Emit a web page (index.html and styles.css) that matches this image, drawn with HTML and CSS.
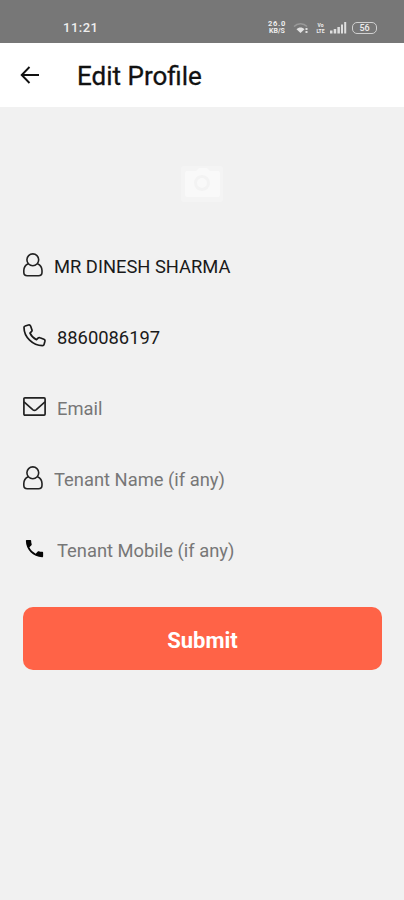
FILE: index.html
```html
<!DOCTYPE html>
<html lang="en">
<head>
    <meta charset="UTF-8">
    <meta name="viewport" content="width=device-width, initial-scale=1.0">
    <title>Edit Profile</title>
    <link rel="stylesheet" href="styles.css">
</head>
<body>

<div class="status-bar">
    <span class="time">11:21</span>
    <div class="status-icons">
        <div class="speed"><span>26.0</span><span>KB/S</span></div>
        <svg class="wifi" width="17" height="12" viewBox="0 0 17 12" fill="none">
            <path d="M1 4.500C4.500.8 10.500.8 14 4.500" stroke="#999" stroke-width="1.500"/>
            <path d="M3.500 7.200C5.800 4.800 9.200 4.800 11.500 7.200L7.500 11z" fill="#e2e2e2"/>
            <path d="M13.500 6v5" stroke="#ddd" stroke-width="2" stroke-dasharray="2 1"/>
        </svg>
        <div class="volte"><span>Vo</span><span>LTE</span></div>
        <svg class="signal" width="17" height="12" viewBox="0 0 17 12" fill="#dedede">
            <rect x="0" y="8.500" width="2.500" height="3"/>
            <rect x="3.700" y="7" width="2.500" height="4.500"/>
            <rect x="7.400" y="5" width="2.500" height="6.500"/>
            <rect x="11" y="2.500" width="2" height="9"/>
            <rect x="14.200" y="0" width="2" height="11.500"/>
        </svg>
        <div class="battery">56</div>
    </div>
</div>

<header class="header">
    <svg class="back" width="20" height="18" viewBox="0 0 20 18" fill="none" stroke="#111" stroke-width="1.900">
        <path d="M9.500 1L1.700 9l7.800 8M2 9h17"/>
    </svg>
    <h1>Edit Profile</h1>
</header>

<main class="content">
    <div class="photo">
        <svg width="44" height="38" viewBox="0 0 44 38">
            <rect x="1" y="1" width="42" height="36" rx="3" fill="#f4f4f4"/>
            <path d="M7 6h9l3-3h8l3 3h8q2 0 2 2v22q0 2-2 2H7q-2 0-2-2V8q0-2 2-2z" fill="#f9f9f9"/>
            <circle cx="22" cy="18" r="6.500" fill="#f9f9f9" stroke="#f3f3f3" stroke-width="3"/>
        </svg>
    </div>

    <form class="form">
        <label class="field">
            <svg class="icon user" width="20" height="24" viewBox="0 0 20 24" fill="none" stroke="#222" stroke-width="1.600">
                <circle cx="9.800" cy="6.800" r="5.900"/>
                <path d="M5.200 10.700C2.500 12 .8 14.500.8 17.600v1.600c0 2.300 1.300 3.500 3.500 3.500h11.200c2.200 0 3.500-1.200 3.500-3.500v-1.600c0-3.100-1.700-5.600-4.500-6.900"/>
            </svg>
            <input type="text" value="MR DINESH SHARMA">
        </label>
        <label class="field">
            <svg class="icon phone" width="23" height="23" viewBox="0 0 23 23" fill="none" stroke="#1a1a1a" stroke-width="1.700" stroke-linejoin="round">
                <path d="M2.200 2L5.400 1c1-.3 1.800.1 2.200 1l1.300 3.700c.3.800.1 1.500-.5 2L7 9.200c1.300 2.900 3.500 5.100 6.500 6.500l1.500-1.500c.6-.6 1.300-.7 2-.4l3.900 1.500c.8.300 1.200 1 1 1.900l-.8 3.200c-.2.900-.8 1.300-1.700 1.300C9.800 21.600 1 13.200 1 3.600c0-.8.400-1.400 1.200-1.600z"/>
            </svg>
            <input type="tel" value="8860086197">
        </label>
        <label class="field">
            <svg class="icon mail" width="23" height="19" viewBox="0 0 23 19" fill="none" stroke="#222" stroke-width="1.700">
                <rect x=".9" y=".9" width="21.200" height="17.200" rx="1"/>
                <path d="M1 4.900l8.700 7.700q1.800 1.400 3.600 0L22 4.900"/>
            </svg>
            <input type="email" placeholder="Email">
        </label>
        <label class="field">
            <svg class="icon user" width="20" height="24" viewBox="0 0 20 24" fill="none" stroke="#222" stroke-width="1.600">
                <circle cx="9.800" cy="6.800" r="5.900"/>
                <path d="M5.200 10.700C2.500 12 .8 14.500.8 17.600v1.600c0 2.300 1.300 3.500 3.500 3.500h11.200c2.200 0 3.500-1.200 3.500-3.500v-1.600c0-3.100-1.700-5.600-4.500-6.900"/>
            </svg>
            <input type="text" placeholder="Tenant Name (if any)">
        </label>
        <label class="field">
            <svg class="icon call" width="23" height="23" viewBox="0 0 24 24" fill="#050505">
                <path d="M6.620 10.790c1.440 2.830 3.760 5.140 6.590 6.590l2.200-2.200c.27-.27.67-.36 1.020-.24 1.120.37 2.330.57 3.570.57.550 0 1 .45 1 1V20c0 .55-.45 1-1 1-9.390 0-17-7.610-17-17 0-.55.450-1 1-1h3.500c.55 0 1 .45 1 1 0 1.250.2 2.450.57 3.570.11.350.03.740-.25 1.020l-2.200 2.200z"/>
            </svg>
            <input type="tel" placeholder="Tenant Mobile (if any)">
        </label>
        <button type="button" class="submit">Submit</button>
    </form>
</main>

</body>
</html>
```

FILE: styles.css
```css
* {
    box-sizing: border-box;
}
body {
    margin: 0;
    min-height: 100vh;
    background-color: #f1f1f1;
    font-family: Roboto, sans-serif;
    color: #111;
}
.status-bar {
    display: flex;
    justify-content: space-between;
    align-items: center;
    height: 43px;
    padding: 12px 27px 0 63px;
    background-color: #777;
    color: #eee;
}
.time {
    font-size: 13px;
    font-weight: 500;
    letter-spacing: 0.5px;
}
.status-icons {
    display: flex;
    align-items: center;
}
.speed,
.volte {
    display: flex;
    flex-direction: column;
    align-items: center;
    font-weight: 700;
}
.speed {
    width: 20px;
    font-size: 7.5px;
    line-height: 8px;
}
.speed span:first-child {
    letter-spacing: 0.7px;
}
.speed span + span {
    font-size: 7px;
    line-height: 7px;
}
.wifi {
    margin-left: 6px;
}
.volte {
    width: 9px;
    margin-left: 6px;
    font-size: 5px;
    line-height: 6px;
}
.signal {
    margin-left: 5px;
}
.battery {
    width: 25px;
    height: 12px;
    margin-left: 5px;
    border: 1.5px solid #d0d0d0;
    border-radius: 5px;
    font-size: 9px;
    font-weight: 500;
    line-height: 10px;
    text-align: center;
}
.header {
    display: flex;
    align-items: center;
    height: 64px;
    padding: 0 20px;
    background-color: #fff;
}
.header h1 {
    margin: 1px 0 0 37px;
    font-size: 26px;
    font-weight: 400;
    -webkit-text-stroke: 0.3px #111;
}
.content {
    padding: 58px 22px 0 23px;
}
.photo {
    height: 72px;
    padding-right: 2px;
    text-align: center;
}
.form {
    display: flex;
    flex-direction: column;
}
.field {
    display: flex;
    align-items: center;
    height: 58px;
    margin-bottom: 13px;
}
.icon {
    flex: none;
}
.user {
    margin: 0 11px 3px 0;
}
.phone,
.mail {
    margin: 0 11px 4px 0;
}
.call {
    margin: 0 11px 3px 0;
}
.field input {
    flex: 1;
    min-width: 0;
    padding: 0;
    border: none;
    outline: none;
    background: none;
    font-family: inherit;
    font-size: 18.35px;
    color: #1a1a1a;
}
.field input::placeholder {
    color: #777;
}
.submit {
    height: 63px;
    margin-top: 15px;
    padding: 3px 0 0;
    border: none;
    border-radius: 10px;
    background-color: #ff6347;
    color: #fff;
    font-family: inherit;
    font-size: 22px;
    font-weight: 700;
    cursor: pointer;
}
```
